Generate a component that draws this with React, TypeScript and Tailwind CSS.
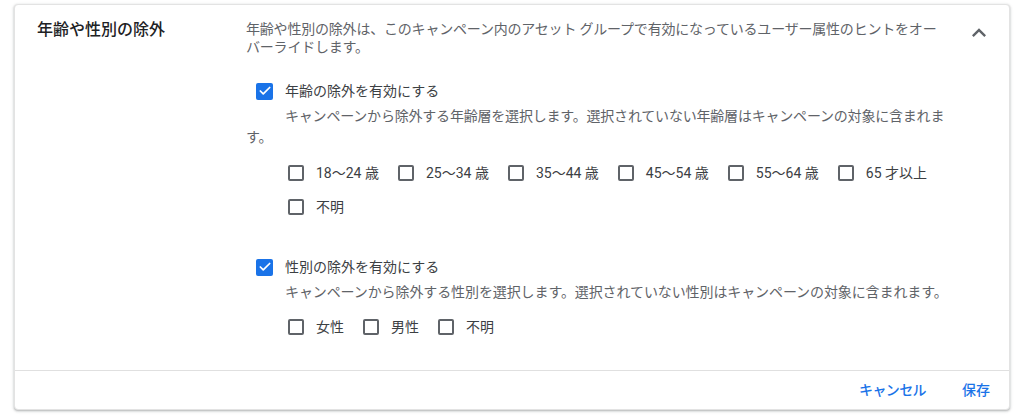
import { Check } from 'lucide-react';

const ages = ['18〜24 歳', '25〜34 歳', '35〜44 歳', '45〜54 歳', '55〜64 歳', '65 才以上', '不明'];
const genders = ['女性', '男性', '不明'];

function Box({ checked }: { checked?: boolean }) {
  if (checked) {
    return (
      <span className="flex h-[17px] w-[17px] shrink-0 items-center justify-center rounded-[2px] bg-[#1a73e8]">
        <Check className="h-[14px] w-[14px] text-white" strokeWidth={3} />
      </span>
    );
  }
  return <span className="block h-[16px] w-[16px] shrink-0 rounded-[2px] border-2 border-[#5f6368]" />;
}

function Option({ label }: { label: string }) {
  return (
    <label className="flex h-[20px] items-center gap-[12px] text-[14px] text-[#3c4043]">
      <Box />
      <span>{label}</span>
    </label>
  );
}

function Toggle({ label }: { label: string }) {
  return (
    <label className="flex h-[20px] items-center gap-[12px] pl-[10px] text-[14px] text-[#3c4043]">
      <Box checked />
      <span>{label}</span>
    </label>
  );
}

export default function App() {
  return (
    <div
      className="min-h-screen bg-white px-[14px] pt-[4px]"
      style={{ fontFamily: 'Roboto, "Noto Sans CJK JP", sans-serif' }}
    >
      <div className="rounded-[4px] border border-[#e3e3e3] bg-white shadow-[0_1px_2px_rgba(60,64,67,0.3),0_1px_3px_1px_rgba(60,64,67,0.1)]">
        {/* Section */}
        <div className="flex pb-[33px] pt-[15px]">
          <div className="w-[231px] pl-[22px] text-[16px] font-medium leading-[20px] text-[#202124]">
            年齢や性別の除外
          </div>

          <div className="w-[701px] text-[14px] leading-[18px] text-[#5f6368]">
            <p className="tracking-[-0.2px]">
              年齢や性別の除外は、このキャンペーン内のアセット グループで有効になっているユーザー属性のヒントをオーバーライドします。
            </p>

            <div className="mt-[25px]">
              <Toggle label="年齢の除外を有効にする" />
              <p className="mt-[5px] indent-[39px] leading-[21px] tracking-[-0.2px]">
                キャンペーンから除外する年齢層を選択します。選択されていない年齢層はキャンペーンの対象に含まれます。
              </p>
              <div className="mt-[15px] flex flex-wrap gap-x-[19px] gap-y-[14px] pl-[42px]">
                {ages.map((a) => (
                  <Option key={a} label={a} />
                ))}
              </div>
            </div>

            <div className="mt-[40px]">
              <Toggle label="性別の除外を有効にする" />
              <p className="mt-[5px] whitespace-nowrap pl-[39px] leading-[21px] tracking-[-0.1px]">
                キャンペーンから除外する性別を選択します。選択されていない性別はキャンペーンの対象に含まれます。
              </p>
              <div className="mt-[14px] flex flex-wrap gap-x-[19px] pl-[42px]">
                {genders.map((g) => (
                  <Option key={g} label={g} />
                ))}
              </div>
            </div>
          </div>

          <div className="flex flex-1 justify-end pr-[16px]">
            <svg viewBox="0 0 24 24" className="mt-[-1px] h-[28px] w-[28px] fill-[#5f6368]">
              <path d="M12 8l-6 6 1.41 1.41L12 10.83l4.59 4.58L18 14z" />
            </svg>
          </div>
        </div>

        {/* Footer */}
        <div className="flex h-[39px] items-center justify-end gap-[36px] border-t border-[#e0e0e0] pr-[19px] text-[14px] font-medium text-[#1a73e8]">
          <button className="tracking-[-0.6px]">キャンセル</button>
          <button>保存</button>
        </div>
      </div>
    </div>
  );
}
